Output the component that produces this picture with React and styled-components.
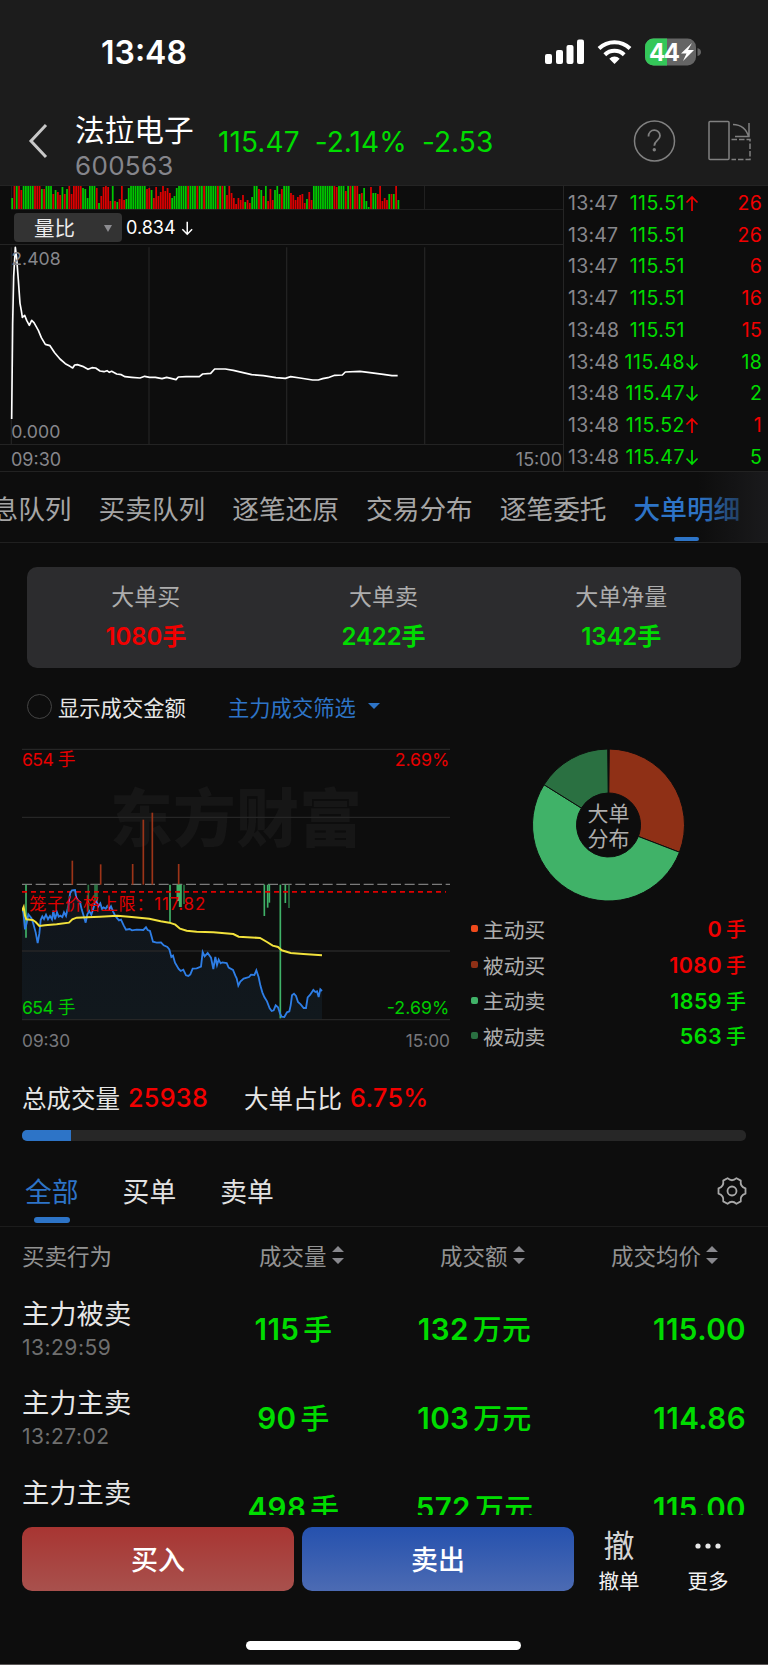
import React from 'react';
import styled, { createGlobalStyle } from 'styled-components';

const RED = '#f20000';
const GREEN = '#00dc00';
const BLUE = '#2d74c7';

const GlobalStyle = createGlobalStyle`
    * {
        box-sizing : border-box;
    }
    body {
        margin : 0;
        background : #0d0d0d;
        color : #e6e6e6;
        font-family : Inter, "Noto Sans CJK SC", sans-serif;
        -webkit-font-smoothing : antialiased;
    }
    svg {
        display : block;
        flex : none;
    }
    button {
        font-family : inherit;
        border : none;
        padding : 0;
    }
`

const Screen = styled.div`
    width : 768px;
    height : 1665px;
    overflow : hidden;
    display : flex;
    flex-direction : column;
    border-bottom : 1px solid #5a5656;
    white-space : nowrap;
`

const StatusBar = styled.div`
    height : 104px;
    flex : none;
    padding : 0 67px 0 101px;
    display : flex;
    align-items : center;
    justify-content : space-between;
    background : #1c1c1c;
`

const Clock = styled.div`
    padding-top : 1px;
    font-size : 32px;
    font-weight : 600;
    letter-spacing : 0;
    color : #fff;
`

const StatusIcons = styled.div`
    display : flex;
    align-items : center;
`

const Header = styled.header`
    height : 82px;
    flex : none;
    padding : 0 16px 0 28px;
    display : flex;
    background : #1c1c1c;
    border-bottom : 1px solid #242424;
`

const BackIcon = styled.svg`
    margin : 19px 26px 0 0;
`

const StockName = styled.div`
    width : 143px;
    h1 {
        margin : 6px 0 0;
        font-size : 29.7px;
        line-height : 40px;
        font-weight : 400;
        color : #fff;
    }
    p {
        margin : 4px 0 0;
        font-size : 26px;
        line-height : 24px;
        color : #85858b;
        letter-spacing : .3px;
    }
`

const Quote = styled.div`
    display : flex;
    gap : 15px;
    flex : 1;
    padding-top : 20px;
    font-size : 28px;
    line-height : 36px;
    color : ${GREEN};
    span {
        letter-spacing : .1px;
    }
`

const HeaderIcons = styled.div`
    display : flex;
    gap : 31px;
    padding-top : 15px;
`

const Market = styled.section`
    height : 286px;
    flex : none;
    display : flex;
    border-bottom : 1px solid #222;
`

const MarketChart = styled.div`
    width : 564px;
    border-right : 1px solid #252525;
`

const IndexRow = styled.div`
    height : 35px;
    padding : 1px 0 0 14px;
    display : flex;
    align-items : center;
    font-size : 18px;
    color : #fff;
    border-bottom : 1px solid #242424;
`

const IndexSelect = styled.button`
    width : 108px;
    height : 29px;
    margin-right : 4px;
    padding : 1px 10px 0 20px;
    display : flex;
    align-items : center;
    justify-content : space-between;
    border-radius : 4px;
    background : #333;
    color : #ececec;
    font-size : 20.5px;
    line-height : 29px;
`

const TimeAxis = styled.div`
    height : ${props => props.$height}px;
    padding : ${props => props.$pad};
    display : flex;
    justify-content : space-between;
    align-items : center;
    font-size : ${props => props.$size}px;
    color : ${props => props.$color};
`

const TickList = styled.ul`
    flex : 1;
    margin : 0;
    padding : 1px 6px 0 4px;
    list-style : none;
`

const Tick = styled.li`
    height : 31.75px;
    display : grid;
    grid-template-columns : 52px 65px 16px 1fr;
    align-items : center;
    font-size : 19.5px;
    letter-spacing : .2px;
    color : ${props => props.$color};
    span:first-child {
        color : #87878c;
    }
    span:nth-child(2) {
        justify-self : end;
        letter-spacing : .5px;
        color : ${GREEN};
    }
    span:last-child {
        text-align : right;
    }
`

const Tabs = styled.nav`
    position : relative;
    height : 71px;
    flex : none;
    display : flex;
    gap : 27px;
    padding-top : 17px;
    border-bottom : 1px solid #202020;
    overflow : hidden;
    &:after {
        content : '';
        position : absolute;
        right : 0;
        top : 0;
        width : 70px;
        height : 71px;
        background : linear-gradient(to right, rgba(26, 26, 28, 0), #1a1a1c);
    }
`

const Tab = styled.a`
    flex : none;
    display : flex;
    flex-direction : column;
    align-items : center;
    font-size : 26.7px;
    line-height : 40px;
    font-weight : ${props => props.$active ? 500 : 400};
    color : ${props => props.$active ? BLUE : '#a5a5a5'};
    &:first-child {
        margin-left : -8.5px;
    }
    &:after {
        content : '';
        width : 25px;
        height : 4px;
        margin-top : 8px;
        border-radius : 2px;
        background : ${props => props.$active ? BLUE : 'transparent'};
    }
`

const SummaryCard = styled.div`
    height : 101px;
    flex : none;
    margin : 24px 27px 0;
    padding : 14px 1px 0 0;
    display : grid;
    grid-template-columns : 1fr 1fr 1fr;
    border-radius : 10px;
    background : #2c2c2e;
`

const Summary = styled.div`
    text-align : center;
    h3 {
        margin : 0;
        font-size : 23px;
        line-height : 32px;
        font-weight : 400;
        color : #adadad;
    }
    p {
        margin : 8px 0 0;
        font-size : 24px;
        line-height : 32px;
        font-weight : 600;
        letter-spacing : -.1px;
        color : ${props => props.$color};
    }
`

const Filters = styled.div`
    height : 79px;
    flex : none;
    padding : 0 0 3px 27px;
    display : flex;
    align-items : center;
    font-size : 21.3px;
    label {
        display : flex;
        align-items : center;
        width : 201px;
    }
`

const Radio = styled.span`
    width : 25px;
    height : 25px;
    margin-right : 6px;
    border : 1px solid #444;
    border-radius : 50%;
`

const FilterLink = styled.a`
    display : flex;
    align-items : center;
    gap : 12px;
    color : ${BLUE};
`

const Flow = styled.section`
    height : 313px;
    flex : none;
    padding : 0 22px;
    display : flex;
`

const FlowChart = styled.div`
    width : 428px;
`

const Distribution = styled.div`
    width : 275px;
    margin-left : 21px;
`

const Donut = styled.svg`
    margin : -1px 0 0 60px;
`

const LegendRow = styled.div`
    height : 35.7px;
    display : flex;
    align-items : center;
    font-size : 20.8px;
    color : #adadad;
    i {
        width : 7px;
        height : 7px;
        margin-right : 5px;
        border-radius : 2px;
        background : ${props => props.$dot};
    }
    b {
        margin-left : auto;
        font-size : 21.5px;
        font-weight : 600;
        letter-spacing : .4px;
        color : ${props => props.$color};
    }
    b span {
        margin-left : 4px;
        font-weight : 500;
        font-size : 20px;
        letter-spacing : 0;
    }
`

const Totals = styled.div`
    height : 70px;
    flex : none;
    padding : 5px 22px 0;
    display : flex;
    align-items : center;
    font-size : 24.5px;
    b {
        margin : 0 36px 0 8px;
        padding-top : 1px;
        font-size : 25.2px;
        font-weight : 500;
        letter-spacing : .3px;
        color : ${RED};
    }
`

const Progress = styled.div`
    height : 11px;
    flex : none;
    margin : 0 22px;
    border-radius : 5px;
    overflow : hidden;
    background : #272727;
`

const ProgressFill = styled.div`
    height : 100%;
    background : ${BLUE};
`

const OrderTabs = styled.div`
    height : 86px;
    flex : none;
    padding : 32px 21px 0 25px;
    display : flex;
    border-bottom : 1px solid #1c1c1c;
    svg {
        margin : 3px 0 0 auto;
    }
`

const OrderTab = styled.a`
    display : flex;
    flex-direction : column;
    align-items : center;
    margin-right : 44px;
    font-size : 26.8px;
    line-height : 38px;
    color : ${props => props.$active ? BLUE : '#e2e2e2'};
    &:after {
        content : '';
        width : 36px;
        height : 6px;
        margin-top : 6px;
        border-radius : 3px;
        background : ${props => props.$active ? BLUE : 'transparent'};
    }
`

const TableHead = styled.div`
    height : 56px;
    flex : none;
    padding : 0 50px 0 22px;
    display : flex;
    align-items : center;
    font-size : 22.5px;
    color : #929292;
    span {
        display : flex;
        align-items : center;
        gap : 5px;
    }
    span:nth-child(1) {
        width : 237px;
    }
    span:nth-child(2) {
        width : 181px;
    }
    span:nth-child(4) {
        margin-left : auto;
    }
`

const Orders = styled.div`
    height : 232px;
    flex : none;
    overflow : hidden;
`

const Order = styled.div`
    height : 89.3px;
    padding : 13px 22px 0;
    display : grid;
    grid-template-columns : 181px 181px 181px 1fr;
`

const OrderName = styled.div`
    font-size : 27.3px;
    line-height : 38px;
    small {
        display : block;
        font-size : 21px;
        line-height : 28px;
        letter-spacing : .5px;
        color : #6f6f6f;
    }
`

const OrderValue = styled.div`
    margin-top : 16px;
    height : 34px;
    line-height : 34px;
    font-size : 29.6px;
    font-weight : 600;
    letter-spacing : .4px;
    text-align : ${props => props.$right ? 'right' : 'center'};
    color : ${GREEN};
    em {
        margin-left : 4px;
        font-style : normal;
        font-size : 28.8px;
        font-weight : 500;
    }
`

const BottomBar = styled.footer`
    height : 76px;
    flex : none;
    padding : 12px 22px 0;
    display : flex;
`

const TradeButton = styled.button`
    width : 272px;
    height : 64px;
    flex : none;
    margin-right : 8px;
    padding-bottom : 2px;
    border-radius : 10px;
    color : #fff;
    font-size : 27px;
    font-weight : 500;
    background : linear-gradient(to bottom, ${props => props.$from}, ${props => props.$to});
`

const BarAction = styled.div`
    width : 74px;
    flex : none;
    margin-right : 15px;
    display : flex;
    flex-direction : column;
    align-items : center;
    font-size : 20.5px;
    line-height : 28px;
    color : #f2f2f2;
    &:last-child {
        margin-right : 0;
    }
`

const ActionGlyph = styled.div`
    height : 36px;
    flex : none;
    margin : 1px 0 4px;
    display : flex;
    align-items : center;
    font-size : 31px;
    line-height : 36px;
    color : #d4d4d4;
`

const HomeIndicator = styled.div`
    width : 275px;
    height : 9px;
    flex : none;
    margin : 50px auto 0 246px;
    border-radius : 5px;
    background : #fff;
`

// one letter for the direction and the bar height, minute by minute
const volumes = (
    'g11 r23 g23 r23 r19 g23 g23 g23 g23 g23 r23 r23 r23 g20 r20 g23 g23 g23 r15 g19 r17 r14 g22 r15 ' +
    'g20 r23 r15 r23 r23 r23 r23 g21 g20 g11 g23 g23 g23 r21 g6 r13 r22 r23 r22 r8 g23 r8 g7 r10 r23 r9 ' +
    'g10 g21 g23 g23 g23 g23 g23 g23 g23 r20 r21 g19 r11 r22 r13 r17 r23 r18 r21 r16 g11 g13 g21 g23 g23 ' +
    'g23 g23 r23 g23 g23 g23 r23 g23 g23 r23 g23 g23 g23 g23 g23 r23 g23 r23 g23 r14 r23 r16 r11 r5 r11 ' +
    'r9 r14 g7 r9 r6 g12 g23 g23 r20 g19 r13 g23 r8 r20 r9 g19 g23 g15 r20 g23 g23 g23 r16 r14 r9 r12 ' +
    'r14 r15 r6 g10 r17 r9 g23 g23 g23 g23 g23 g23 g23 g23 g23 r23 r22 g23 g23 g23 r18 g23 r23 g23 r23 ' +
    'r23 g15 r16 g21 g8 g2 r22 g16 g16 r15 r23 r8 r11 r9 g15 r15 g15 r23 g9'
).split(' ')

const ticks = [
    { time: '13:47', price: '115.51', dir: 'up', qty: 26, color: RED },
    { time: '13:47', price: '115.51', qty: 26, color: RED },
    { time: '13:47', price: '115.51', qty: 6, color: RED },
    { time: '13:47', price: '115.51', qty: 16, color: RED },
    { time: '13:48', price: '115.51', qty: 15, color: RED },
    { time: '13:48', price: '115.48', dir: 'down', qty: 18, color: GREEN },
    { time: '13:48', price: '115.47', dir: 'down', qty: 2, color: GREEN },
    { time: '13:48', price: '115.52', dir: 'up', qty: 1, color: RED },
    { time: '13:48', price: '115.47', dir: 'down', qty: 5, color: GREEN },
]

const tabs = ['息队列', '买卖队列', '逐笔还原', '交易分布', '逐笔委托', '大单明细']

const legend = [
    { name: '主动买', value: 0, dot: '#f04a1c', color: RED },
    { name: '被动买', value: 1080, dot: '#8f3016', color: RED },
    { name: '主动卖', value: 1859, dot: '#40b268', color: GREEN },
    { name: '被动卖', value: 563, dot: '#2a7041', color: GREEN },
]

const orders = [
    { name: '主力被卖', time: '13:29:59', volume: 115, amount: 132, price: '115.00' },
    { name: '主力主卖', time: '13:27:02', volume: 90, amount: 103, price: '114.86' },
    { name: '主力主卖', volume: 498, amount: 572, price: '115.00' },
]

// x, top, bottom, color, width
const flowBars = [
    [217, 391, 463, '#9c3418', 5], [302, 402, 463, '#9c3418', 5], [398, 401, 463, '#9c3418', 5],
    [430, 268, 463, '#9c3418', 5], [457, 247, 463, '#9c3418', 5], [536, 401, 463, '#9c3418', 5],
    [78, 463, 622, '#40b268', 5], [265, 463, 541, '#2a7041', 5], [288, 463, 512, '#2a7041', 11],
    [510, 463, 577, '#40b268', 5], [534, 463, 512, '#40b268', 9], [541, 463, 530, '#40b268', 9],
    [552, 463, 521, '#2a7041', 5], [793, 463, 557, '#40b268', 5], [803, 463, 532, '#40b268', 5],
    [808, 463, 517, '#40b268', 5], [841, 463, 864, '#40b268', 5], [856, 463, 518, '#40b268', 5],
    [867, 463, 533, '#2a7041', 5],
]

const priceLine = '66,543 70,545 75,597 80,578 85,552 94,563 100,580 107,606 113,638 118,610 122,569 127,558 132,566 138,553 144,567 150,557 156,567 160,541 165,567 171,546 176,559 181,556 187,560 192,546 198,557 203,535 208,503 211,487 216,480 225,479 229,502 234,511 240,515 245,537 250,553 257,577 262,552 268,542 274,553 279,538 285,518 290,514 295,528 301,519 306,536 311,531 317,535 322,527 328,536 333,528 339,543 344,553 350,562 357,570 363,568 371,585 378,598 389,596 396,600 410,598 430,599 438,591 443,599 450,602 459,634 470,637 483,636 491,645 502,650 508,657 514,680 519,676 525,697 536,716 542,722 550,718 558,735 565,737 571,732 578,715 590,714 603,709 608,665 614,678 623,668 633,682 640,716 646,680 651,704 656,688 662,699 667,696 680,698 686,712 699,719 706,736 710,744 715,766 721,754 731,745 747,740 753,733 763,734 769,720 776,741 781,765 787,786 793,800 801,813 809,834 815,842 821,840 827,825 834,831 840,849 845,859 853,860 861,846 868,843 872,825 876,795 882,790 888,797 894,815 902,822 911,833 918,833 923,801 930,794 940,779 946,785 951,783 956,800 961,777 966,782'

const DownTriangle = ({ width, height, color }) => (
    <svg width={width} height={height} viewBox="0 0 12 8" preserveAspectRatio="none">
        <path d="M0 0h12L6 8z" fill={color} />
    </svg>
)

const Arrow = ({ up, size = 18 }) => (
    <svg width={size * .78} height={size} viewBox="0 0 14 18" fill="none" stroke={up ? RED : 'currentColor'} strokeWidth="1.7">
        <path d={up ? 'M7 17V3M1.5 8.5L7 3l5.5 5.5' : 'M7 2v14M1.5 10.5L7 16l5.5-5.5'} />
    </svg>
)

const Sort = () => (
    <svg width="12" height="20" viewBox="0 0 12 20">
        <path d="M0 7h12L6 1zM0 13h12l-6 6z" fill="#88888d" />
    </svg>
)

function StatusArea() {
    return (
        <StatusIcons>
            <svg width="156" height="30" viewBox="0 0 156 30">
                <g fill="#fff">
                    <rect x="0" y="17" width="7" height="10" rx="2" />
                    <rect x="11" y="13" width="7" height="14" rx="2" />
                    <rect x="21.5" y="8" width="7" height="19" rx="2" />
                    <rect x="32" y="2.5" width="7" height="24.5" rx="2" />
                    <path d="M69.5 27l-5.2-5.3a7.5 7.5 0 0 1 10.4 0z" />
                </g>
                <g fill="none" stroke="#fff" strokeWidth="4">
                    <path d="M54 11.5a22.3 22.3 0 0 1 31 0" />
                    <path d="M59.8 17.7a14 14 0 0 1 19.4 0" />
                </g>
                <clipPath id="battery"><rect x="100" y="1.5" width="51" height="27" rx="8.5" /></clipPath>
                <g clipPath="url(#battery)">
                    <rect x="100" y="1" width="51" height="28" fill="#656565" />
                    <rect x="100" y="1" width="22" height="28" fill="#34c759" />
                </g>
                <path d="M152.5 11q3.5 1 3.5 4t-3.5 4z" fill="#656565" />
                <text x="104" y="23.5" fontSize="24" fontWeight="700" textLength="31" fill="#fff">44</text>
                <path d="M147 6l-11 10.5h5.5L138 24l11-11h-6z" fill="#fff" />
            </svg>
        </StatusIcons>
    )
}

function VolumeStrip() {
    return (
        <svg width="563" height="24" viewBox="0 0 563 24">
            <path d="M11.5 0v23M149.5 0v23M287.5 0v23M424.5 0v23M11 23.5h552" stroke="#202020" />
            {volumes.map((v, i) => {
                const h = Number(v.slice(1))
                const step = 388.5 / volumes.length
                return <rect key={i} x={11.3 + i * step} y={23 - h} width="1.75" height={h} fill={v[0] === 'r' ? '#dc0000' : '#00c800'} />
            })}
        </svg>
    )
}

function RatioChart() {
    return (
        <svg width="563" height="200" viewBox="0 195 1689 600">
            <path d="M34 202v590M447 202v590M860 202v590M1274 202v590" stroke="#222" strokeWidth="4" />
            <polyline
                points="35,717 38,430 41,290 46,202 50,235 55,300 60,370 64,392 67,412 74,406 80,421 88,436 95,421 102,428 115,451 124,473 136,493 150,497 164,518 180,537 196,551 210,559 218,564 224,555 232,554 248,559 264,568 276,563 287,564 300,573 312,575 321,572 328,577 335,574 350,582 364,584 375,590 395,592 420,594 434,589 449,592 466,592 486,596 500,592 516,596 528,599 535,591 558,590 598,590 608,582 632,580 644,567 676,567 700,571 755,584 790,587 828,593 856,595 872,590 900,594 938,600 955,600 968,596 984,593 1004,586 1027,585 1036,576 1080,574 1110,578 1150,583 1176,587 1193,587"
                fill="none" stroke="#fff" strokeWidth="5" strokeLinejoin="round" />
            <g fontSize="53" fill="#87878c">
                <text x="34" y="254" textLength="148">2.408</text>
                <text x="34" y="773" textLength="147">0.000</text>
            </g>
            <path d="M0 794h1689" stroke="#282828" strokeWidth="3" />
        </svg>
    )
}

function BigOrderChart() {
    return (
        <svg width="428" height="275" viewBox="66 50 1284 825">
            <defs>
                <linearGradient id="area" x1="0" y1="0" x2="0" y2="1">
                    <stop offset="0" stopColor="#10151c" />
                    <stop offset="1" stopColor="#11181d" />
                </linearGradient>
            </defs>
            <text x="330" y="333" fontSize="188" fontWeight="900" textLength="756" fill="#161616">东方财富</text>
            <polygon points={`66,866 ${priceLine} 966,866`} fill="url(#area)" />
            <path d="M66 57h1284M66 261h1284M66 662h1284M66 868h1284" stroke="#262626" strokeWidth="4" />
            <path d="M66 462h1284" stroke="#7b7b7b" strokeWidth="4" strokeDasharray="30 11" />
            {flowBars.map(([x, y1, y2, color, w], i) => (
                <path key={i} d={`M${x} ${y1}V${y2}`} stroke={color} strokeWidth={w} />
            ))}
            <path d="M66 484.5h1272" stroke="#e00000" strokeWidth="5" strokeDasharray="15 12" />
            <polyline points={priceLine} fill="none" stroke="#2e7ee6" strokeWidth="5.5" />
            <polyline
                points="66,541 71,530 75,556 79,567 98,569 107,575 118,587 135,585 170,582 207,577 217,567 230,562 262,561 300,559 352,556 395,560 448,565 482,573 508,577 526,583 540,595 560,601 590,604 640,606 700,611 716,619 780,623 801,635 818,646 834,650 845,660 872,668 910,671 966,675"
                fill="none" stroke="#f2e23c" strokeWidth="6" />
            <g fontSize="53">
                <text x="66" y="107" fill="#e60000" textLength="160">654 手</text>
                <text x="1348" y="107" fill="#e60000" textAnchor="end">2.69%</text>
                <text x="66" y="850" fill="#00cc00" textLength="160">654 手</text>
                <text x="1348" y="850" fill="#00cc00" textAnchor="end" textLength="188">-2.69%</text>
                <text x="88" y="538" fill="#e00000" fontSize="51" textLength="528">笼子价格上限：117.82</text>
            </g>
        </svg>
    )
}

// angles in degrees, clockwise from the top
function slice(from, to) {
    const at = (deg, r) => {
        const a = (deg - 90) * Math.PI / 180
        return `${77 + r * Math.cos(a)} ${77 + r * Math.sin(a)}`
    }
    const large = to - from > 180 ? 1 : 0
    return `M${at(from, 76)}A76 76 0 ${large} 1 ${at(to, 76)}L${at(to, 32)}A32 32 0 ${large} 0 ${at(from, 32)}Z`
}

export default function App() {
    return (
        <Screen>
            <GlobalStyle />
            <StatusBar>
                <Clock>13:48</Clock>
                <StatusArea />
            </StatusBar>

            <Header>
                <BackIcon width="21" height="36" viewBox="0 0 21 36">
                    <path d="M18 2L3 18l15 16" fill="none" stroke="#c8c8c8" strokeWidth="3" />
                </BackIcon>
                <StockName>
                    <h1>法拉电子</h1>
                    <p>600563</p>
                </StockName>
                <Quote>
                    <span>115.47</span>
                    <span>-2.14%</span>
                    <span>-2.53</span>
                </Quote>
                <HeaderIcons>
                    <svg width="43" height="44" viewBox="0 0 43 44" fill="none" stroke="#808080">
                        <circle cx="21.5" cy="22" r="20" strokeWidth="1.5" />
                        <path d="M15.5 17.5c0-8.5 11.5-8 11.5-.8 0 4.8-5.7 4.5-5.7 10" strokeWidth="1.8" />
                        <circle cx="21.3" cy="30.8" r="1.7" fill="#808080" stroke="none" />
                    </svg>
                    <svg width="45" height="44" viewBox="0 0 45 44" fill="none" stroke="#808080" strokeWidth="1.5">
                        <rect x="2" y="2.5" width="20" height="38" rx="1" />
                        <path d="M26 5.5c8 0 14 5 15.5 12.5M42 4v13.5H28" />
                        <path d="M24.5 20.5H43v20H24.5" strokeDasharray="5.5 2" />
                    </svg>
                </HeaderIcons>
            </Header>

            <Market>
                <MarketChart>
                    <VolumeStrip />
                    <IndexRow>
                        <IndexSelect>
                            量比
                            <DownTriangle width={8} height={7} color="#8c8c90" />
                        </IndexSelect>
                        <span>0.834&nbsp;</span>
                        <Arrow size={16} />
                    </IndexRow>
                    <RatioChart />
                    <TimeAxis $height={27} $pad="1px 1px 0 11px" $size={18} $color="#87878c">
                        <span>09:30</span>
                        <span>15:00</span>
                    </TimeAxis>
                </MarketChart>
                <TickList>
                    {ticks.map((t, i) => (
                        <Tick key={i} $color={t.color}>
                            <span>{t.time}</span>
                            <span>{t.price}</span>
                            <span>{t.dir && <Arrow up={t.dir === 'up'} />}</span>
                            <span>{t.qty}</span>
                        </Tick>
                    ))}
                </TickList>
            </Market>

            <Tabs>
                {tabs.map(tab => <Tab key={tab} $active={tab === '大单明细'}>{tab}</Tab>)}
            </Tabs>

            <SummaryCard>
                <Summary $color={RED}>
                    <h3>大单买</h3>
                    <p>1080手</p>
                </Summary>
                <Summary $color={GREEN}>
                    <h3>大单卖</h3>
                    <p>2422手</p>
                </Summary>
                <Summary $color={GREEN}>
                    <h3>大单净量</h3>
                    <p>1342手</p>
                </Summary>
            </SummaryCard>

            <Filters>
                <label><Radio />显示成交金额</label>
                <FilterLink>
                    主力成交筛选
                    <DownTriangle width={12} height={6} color={BLUE} />
                </FilterLink>
            </Filters>

            <Flow>
                <FlowChart>
                    <BigOrderChart />
                    <TimeAxis $height={37} $pad="0" $size={17.3} $color="#77777b">
                        <span>09:30</span>
                        <span>15:00</span>
                    </TimeAxis>
                </FlowChart>
                <Distribution>
                    <Donut width="155" height="165" viewBox="-.5 -2 155 165">
                        <g stroke="#0d0d0d" strokeWidth="1">
                            <path d={slice(0.6, 111)} fill="#8f3016" />
                            <path d={slice(111, 302)} fill="#40b268" />
                            <path d={slice(302, 359.4)} fill="#2a7041" />
                        </g>
                        <g fill="#adadad" fontSize="21" textAnchor="middle">
                            <text x="77" y="73">大单</text>
                            <text x="77" y="98">分布</text>
                        </g>
                    </Donut>
                    {legend.map(row => (
                        <LegendRow key={row.name} $dot={row.dot} $color={row.color}>
                            <i />{row.name}
                            <b>{row.value}<span>手</span></b>
                        </LegendRow>
                    ))}
                </Distribution>
            </Flow>

            <Totals>
                总成交量<b>25938</b>
                大单占比<b>6.75%</b>
            </Totals>
            <Progress>
                <ProgressFill style={{ width: '6.75%' }} />
            </Progress>

            <OrderTabs>
                <OrderTab $active>全部</OrderTab>
                <OrderTab>买单</OrderTab>
                <OrderTab>卖单</OrderTab>
                <svg width="30" height="30" viewBox="0 0 30 30" fill="none" stroke="#a8a8a8" strokeWidth="1.8" strokeLinejoin="round">
                    <path d="M10.5 2.2Q15 6.2 19.5 2.2L23.8 4.6Q22.8 10.5 28.5 12.3V17.7Q22.8 19.5 23.8 25.4L19.5 27.8Q15 23.8 10.5 27.8L6.2 25.4Q7.2 19.5 1.5 17.7V12.3Q7.2 10.5 6.2 4.6Z" />
                    <circle cx="15" cy="15" r="4.5" />
                </svg>
            </OrderTabs>

            <TableHead>
                <span>买卖行为</span>
                <span>成交量<Sort /></span>
                <span>成交额<Sort /></span>
                <span>成交均价<Sort /></span>
            </TableHead>

            <Orders>
                {orders.map((o, i) => (
                    <Order key={i}>
                        <OrderName>{o.name}{o.time && <small>{o.time}</small>}</OrderName>
                        <OrderValue>{o.volume}<em>手</em></OrderValue>
                        <OrderValue>{o.amount}<em>万元</em></OrderValue>
                        <OrderValue $right>{o.price}</OrderValue>
                    </Order>
                ))}
            </Orders>

            <BottomBar>
                <TradeButton $from="#a83532" $to="#a8514d">买入</TradeButton>
                <TradeButton $from="#2551ae" $to="#4c6bb3">卖出</TradeButton>
                <BarAction>
                    <ActionGlyph>撤</ActionGlyph>
                    撤单
                </BarAction>
                <BarAction>
                    <ActionGlyph>
                        <svg width="26" height="6" viewBox="0 0 26 6" fill="#e8e8e8">
                            <circle cx="3" cy="3" r="2.6" />
                            <circle cx="13" cy="3" r="2.6" />
                            <circle cx="23" cy="3" r="2.6" />
                        </svg>
                    </ActionGlyph>
                    更多
                </BarAction>
            </BottomBar>
            <HomeIndicator />
        </Screen>
    )
}
